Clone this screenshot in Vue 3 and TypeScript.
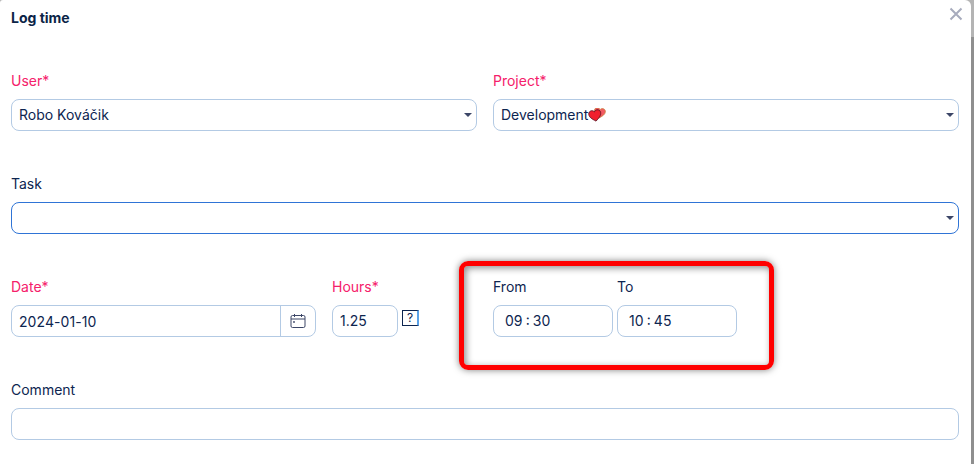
<script setup lang="ts">
type TimeField = { label: string; value: string }

const timeFields: TimeField[] = [
  { label: 'From', value: '09 : 30' },
  { label: 'To', value: '10 : 45' }
]

const heart = 'M6 11C2 8 0 6 0 3.2 0 1.3 1.4 0 3.2 0 4.3 0 5.4.6 6 1.6 6.6.6 7.7 0 8.8 0 10.6 0 12 1.3 12 3.2 12 6 10 8 6 11z'
</script>

<template>
  <div class="page">
    <div class="modal">
      <header class="modal-head">
        <h2>Log time</h2>
        <svg class="close" width="14" height="14" viewBox="0 0 14 14">
          <path d="M1.5 1.5 L12.5 12.5 M12.5 1.5 L1.5 12.5" />
        </svg>
      </header>

      <section class="row two">
        <div class="field">
          <label class="required">User*</label>
          <div class="control select">
            <span>Robo Kováčik</span>
            <i class="caret"></i>
          </div>
        </div>
        <div class="field">
          <label class="required">Project*</label>
          <div class="control select">
            <span>Development</span>
            <svg class="heart" width="18" height="14" viewBox="0 0 18 14">
              <path class="back" :d="heart" transform="translate(6 0.2) rotate(10 6 5) scale(0.92)" />
              <path class="front" :d="heart" transform="translate(1 2.2) rotate(-10 6 5)" />
            </svg>
            <i class="caret"></i>
          </div>
        </div>
      </section>

      <section class="row">
        <div class="field">
          <label>Task</label>
          <div class="control select focused">
            <span></span>
            <i class="caret"></i>
          </div>
        </div>
      </section>

      <section class="row times">
        <div class="field date">
          <label class="required">Date*</label>
          <div class="control with-addon">
            <span class="date-value">2024-01-10</span>
            <span class="addon">
              <svg width="16" height="16" viewBox="0 0 16 16">
                <rect x="1" y="2.5" width="14" height="12" rx="1.5" />
                <path d="M1 6H15 M4.5 1V4 M11.5 1V4" />
                <circle cx="4" cy="9" r="0.6" />
              </svg>
            </span>
          </div>
        </div>
        <div class="field hours">
          <label class="required">Hours*</label>
          <div class="hours-line">
            <div class="control"><span>1.25</span></div>
            <span class="hint">?</span>
          </div>
        </div>
        <div v-for="f in timeFields" :key="f.label" class="field time">
          <label>{{ f.label }}</label>
          <div class="control"><span>{{ f.value }}</span></div>
        </div>
      </section>

      <section class="row">
        <div class="field">
          <label>Comment</label>
          <div class="control"></div>
        </div>
      </section>

      <div class="highlight"></div>
    </div>
  </div>
</template>

<style>
html,
body {
  margin: 0;
  background: #8f8f8f;
  overflow: hidden;
}
</style>

<style scoped>
.page {
  width: 974px;
  height: 464px;
  overflow: hidden;
  background: linear-gradient(#b4b4b4 37px, #8f8f8f 37px);
  font-family: Inter, "Noto Sans", sans-serif;
  font-size: 14px;
  color: #0d2550;
}
.modal {
  position: relative;
  width: 971px;
  height: 464px;
  box-sizing: border-box;
  padding: 0 12px 0 11px;
  background: #fff;
  border-radius: 3px 6px 0 0;
}
.modal-head {
  display: flex;
  justify-content: space-between;
  height: 71px;
  padding-top: 9px;
  box-sizing: border-box;
}
h2 {
  margin: 0;
  font-size: 14px;
  line-height: 17px;
  font-weight: 700;
  color: #0b2447;
}
.close {
  margin: -2px -4px 0 0;
}
.close path {
  stroke: #a7abbd;
  stroke-width: 2;
  fill: none;
}
.row {
  display: flex;
  gap: 16px;
  margin-bottom: 43px;
}
.field {
  flex: 1;
  display: flex;
  flex-direction: column;
  gap: 9px;
  min-width: 0;
}
label {
  line-height: 20px;
  height: 19px;
  color: #0d2550;
}
label.required {
  color: #f5206a;
}
.control {
  display: flex;
  align-items: center;
  height: 32px;
  box-sizing: border-box;
  padding: 0 7px 2px;
  background: #fff;
  border: 1px solid #b3cae4;
  border-radius: 8px;
}
.select {
  position: relative;
}
.focused {
  border-color: #2f74d6;
}
.caret {
  position: absolute;
  right: 4px;
  top: 13px;
  width: 0;
  height: 0;
  border-left: 4px solid transparent;
  border-right: 4px solid transparent;
  border-top: 4px solid #3c4667;
}
.heart {
  margin-top: 1px;
}
.heart .back {
  fill: #f25a62;
  stroke: #c9803c;
  stroke-width: 0.8;
}
.heart .front {
  fill: #f0202e;
  stroke: #5b1020;
  stroke-width: 0.8;
}
.times {
  gap: 0;
}
.date {
  flex: 0 0 305px;
  margin-right: 16px;
}
.with-addon {
  padding: 0 0 0 7px;
}
.date-value {
  flex: 1;
  letter-spacing: 0.08px;
}
.addon {
  display: flex;
  align-items: center;
  justify-content: center;
  width: 34px;
  height: 100%;
  border-left: 1px solid #b3cae4;
}
.addon svg {
  fill: none;
  stroke: #3c4667;
  stroke-width: 1;
}
.hours {
  flex: 0 0 128px;
  margin-right: 33px;
}
.hours-line {
  display: flex;
  gap: 4px;
}
.hours-line .control {
  width: 66px;
}
.hint {
  width: 17px;
  height: 16px;
  margin-top: 5px;
  box-sizing: border-box;
  border: 1px solid #0d2550;
  border-right: 2px solid #5aa2e8;
  font-size: 12px;
  line-height: 14px;
  text-align: center;
}
.time {
  flex: 0 0 120px;
  margin-right: 4px;
}
.time .control {
  padding-left: 11px;
  word-spacing: -0.8px;
}
.highlight {
  position: absolute;
  left: 459px;
  top: 261px;
  width: 315px;
  height: 109px;
  box-sizing: border-box;
  border: 5px solid #f00;
  border-radius: 9px;
  box-shadow: 0 0 7px rgba(0, 0, 0, 0.5), inset 2px 2px 7px rgba(0, 0, 0, 0.45);
}
</style>
